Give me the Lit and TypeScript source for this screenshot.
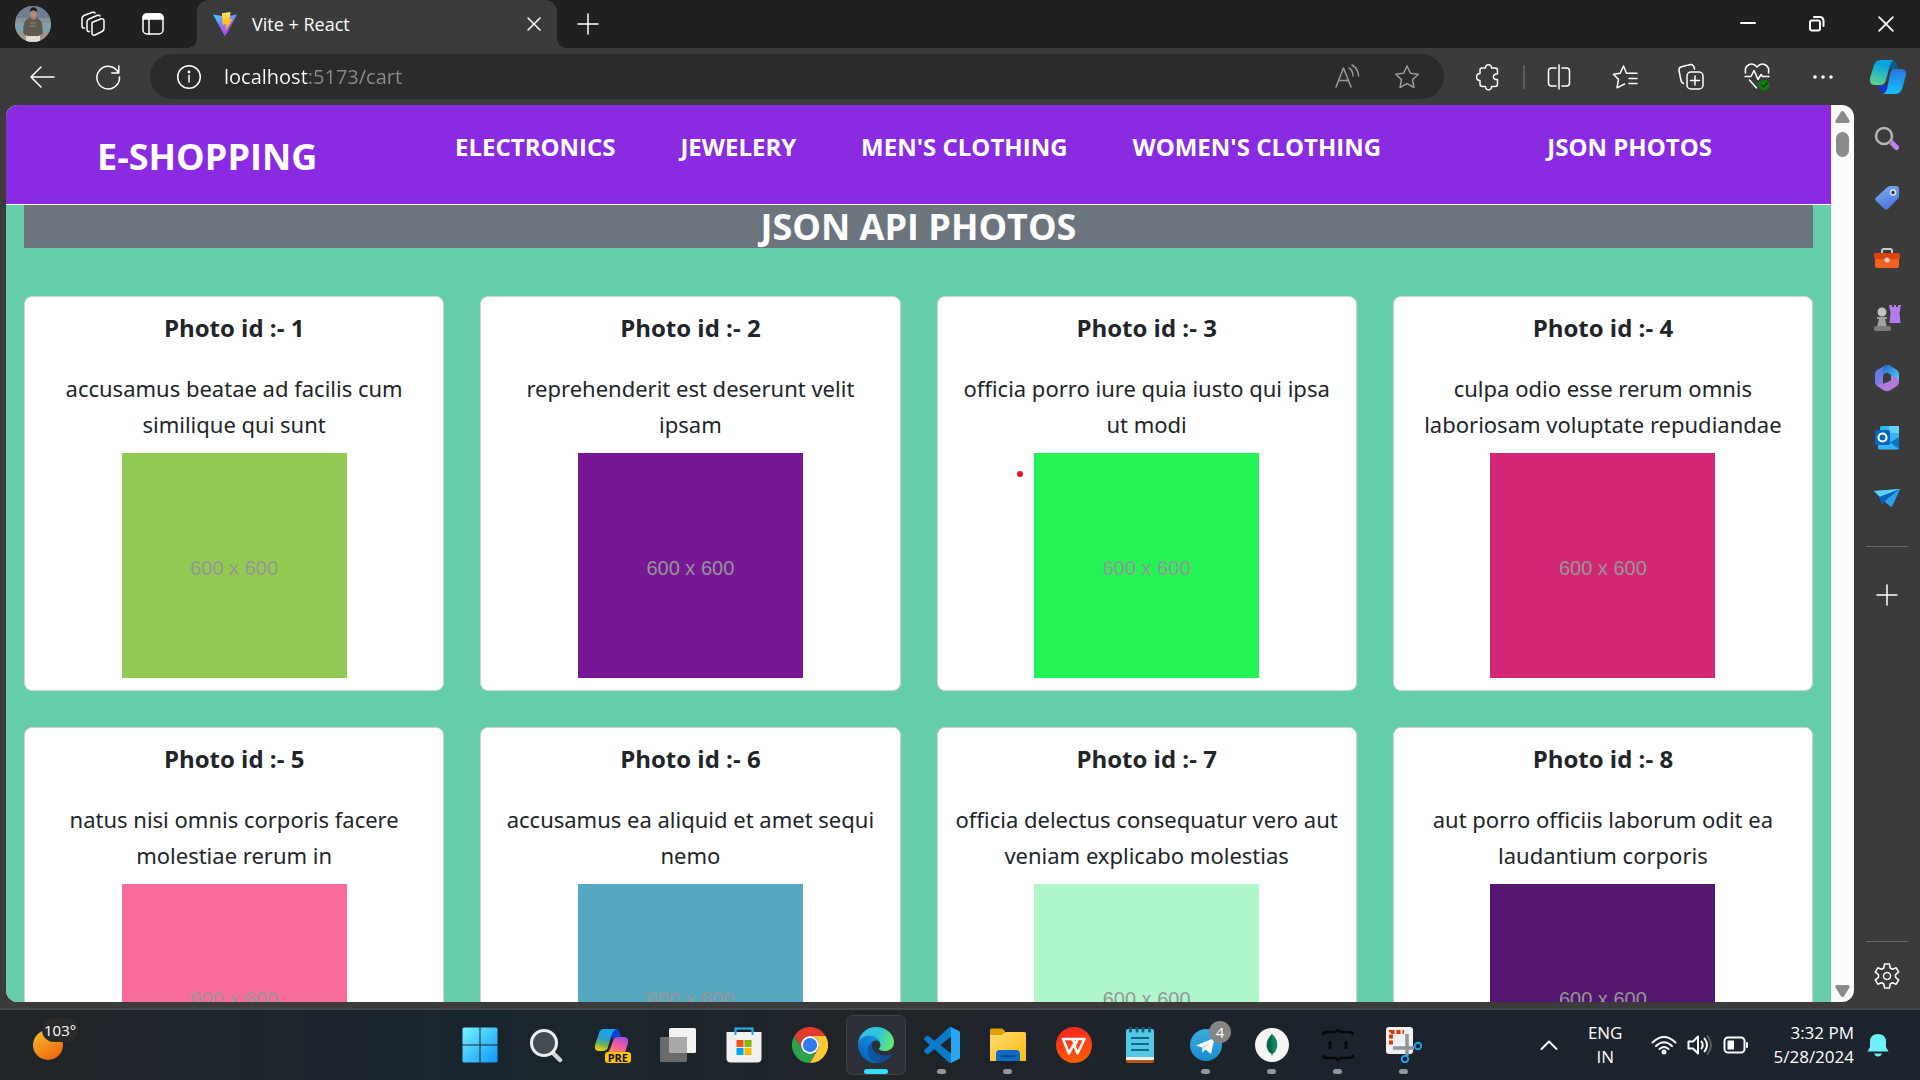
import { LitElement, html, css, nothing, TemplateResult } from "lit";
import { customElement, property } from "lit/decorators.js";
import { classMap } from "lit/directives/class-map.js";
import { styleMap } from "lit/directives/style-map.js";

interface Photo {
  id: number;
  title: string;
  color: string;
}

const PHOTOS: Photo[] = [
  { id: 1, title: "accusamus beatae ad facilis cum similique qui sunt", color: "#92c952" },
  { id: 2, title: "reprehenderit est deserunt velit ipsam", color: "#771796" },
  { id: 3, title: "officia porro iure quia iusto qui ipsa ut modi", color: "#24f355" },
  { id: 4, title: "culpa odio esse rerum omnis laboriosam voluptate repudiandae", color: "#d32776" },
  { id: 5, title: "natus nisi omnis corporis facere molestiae rerum in", color: "#f66b97" },
  { id: 6, title: "accusamus ea aliquid et amet sequi nemo", color: "#56a8c2" },
  { id: 7, title: "officia delectus consequatur vero aut veniam explicabo molestias", color: "#b0f7cc" },
  { id: 8, title: "aut porro officiis laborum odit ea laudantium corporis", color: "#54176f" },
];

const CATEGORIES = ["ELECTRONICS", "JEWELERY", "MEN'S CLOTHING", "WOMEN'S CLOTHING"];

/* ---------- browser chrome icons ---------- */

const avatar = html`<svg width="36" height="36" viewBox="0 0 36 36">
  <defs><clipPath id="av"><circle cx="18" cy="18" r="18" /></clipPath></defs>
  <g clip-path="url(#av)">
    <rect width="36" height="36" fill="#8a9299" />
    <rect y="0" width="36" height="12" fill="#6d7e90" />
    <rect y="17" width="36" height="9" fill="#7fa3ad" />
    <rect y="26" width="36" height="10" fill="#9d968b" />
    <path d="M11 29 11 36 25 36 25 29Z" fill="#e3dccf" />
    <path d="M8.500 28c-.5-8 0-14 5.500-16l4-1 4 1c5.500 2 6 8 5.500 16l-3 1v1H11.500v-1z" fill="#5f5a4e" />
    <path d="M15 17h6M15 20h6" stroke="#94806a" stroke-width="1" />
    <path d="M16 10h5v3l-2.500 1-2.500-1z" fill="#a87660" />
    <ellipse cx="18.500" cy="7.500" rx="3.300" ry="4.200" fill="#b58a72" />
    <path d="M14.800 6.500c-.5-7 8-7 7.400 0-1-2-6-3-7.400 0z" fill="#1c1a1b" />
  </g>
</svg>`;

const workspaces = html`<svg width="26" height="26" viewBox="0 0 26 26" class="line">
  <path d="M12 11.500 20.500 8q3.500-.8 3.500 2v7.500q0 2-2 3L15 24q-3 1-3-2z" />
  <path d="M9.500 20.500Q7 21 7 18.500V11q0-2 2-3l8.500-3.700q1.800-.5 2.500.700" />
  <path d="M4.500 17Q2 17.500 2 15V7.500q0-2 2-3l8.500-3.200q1.800-.5 2.500.700" />
</svg>`;

const tabActions = html`<svg width="24" height="24" viewBox="0 0 24 24" class="line">
  <rect x="2" y="2" width="20" height="20" rx="4" />
  <path d="M2 7V6q0-4 4-4h12q4 0 4 4v1z" fill="#fff" />
  <path d="M8 7v15" />
</svg>`;

const viteLogo = html`<svg width="24" height="24" viewBox="0 0 24 24">
  <defs>
    <linearGradient id="vt" x1="0" y1="0" x2=".6" y2="1"><stop offset="0" stop-color="#41d1ff" /><stop offset="1" stop-color="#bd34fe" /></linearGradient>
    <linearGradient id="vb" x1="0" y1="0" x2="0" y2="1"><stop offset="0" stop-color="#ffea83" /><stop offset=".3" stop-color="#ffcf30" /><stop offset="1" stop-color="#ffa800" /></linearGradient>
  </defs>
  <path d="M0 2.500 12 4.500 24 2.500 12.500 23.500q-.5.700-1 0z" fill="url(#vt)" />
  <path d="M9 1.300 17.500 0 16.500 7.500 19.500 7 12.500 19 13 12 9.500 13z" fill="url(#vb)" />
</svg>`;

const closeIcon = (size: number) => html`<svg width=${size} height=${size} viewBox="0 0 14 14" class="line"><path d="M1 1 13 13M13 1 1 13" /></svg>`;
const plusIcon = html`<svg width="22" height="22" viewBox="0 0 22 22" class="line"><path d="M11 1v20M1 11h20" /></svg>`;
const minimizeIcon = html`<svg width="16" height="16" viewBox="0 0 16 16" class="line strong"><path d="M1 7h14" /></svg>`;
const restoreIcon = html`<svg width="18" height="18" viewBox="0 0 18 18" class="line strong">
  <rect x="2" y="5.500" width="10" height="10" rx="2" /><path d="M6 2h5.500Q15.500 2 15.500 6v5" />
</svg>`;

const backIcon = html`<svg width="26" height="24" viewBox="0 0 26 24" class="line"><path d="M25 12H2M12 2 2 12 12 22" /></svg>`;
const refreshIcon = html`<svg width="26" height="26" viewBox="0 0 26 26" class="line">
  <path d="M23.500 9A11.300 11.300 0 1 0 24.500 13M23.800 2v7h-7" />
</svg>`;
const infoIcon = html`<svg width="26" height="26" viewBox="0 0 26 26" class="line">
  <circle cx="13" cy="13" r="11.300" /><path d="M13 11.500V18" /><circle cx="13" cy="8" r=".7" fill="#fff" />
</svg>`;
const readAloud = html`<svg width="26" height="26" viewBox="0 0 26 26" class="line dim">
  <path d="M2 23 9.500 4 17 23M5 16.500h9M15 4q4 2.500 4 8M18 1q6.500 4 6.500 11" />
</svg>`;
const STAR = "M13 2 16.400 9.200 24.300 10.200 18.500 15.600 20 23.500 13 19.600 6 23.500 7.500 15.600 1.700 10.200 9.600 9.200Z";
const starIcon = html`<svg width="26" height="26" viewBox="0 0 26 26" class="line dim"><path d=${STAR} /></svg>`;
const puzzleIcon = html`<svg width="26" height="28" viewBox="0 0 26 28" class="line">
  <path d="M4 7Q4 5 6 5H9.500C9 .5 16 .5 15.500 5H19q2.500 0 2.500 2.500V11c-5.500-1-5.500 6.500 0 5.500V21q0 2.500-2.500 2.500h-3.500c.5 4.500-6.500 4.500-6 0H6.500Q4 23.500 4 21v-3.500c-4.500 0-4.500-7 0-7z" />
</svg>`;
const splitIcon = html`<svg width="26" height="26" viewBox="0 0 26 26" class="line">
  <path d="M10 4H5.500Q2.500 4 2.500 7v12q0 3 3 3H10M16 4h4.500q3 0 3 3v12q0 3-3 3H16M13 1v24" />
</svg>`;
const favoritesIcon = html`<svg width="26" height="26" viewBox="0 0 26 26" class="line">
  <path d="M14.500 9.200 11.500 2 8.200 9.200 1.500 10.300 6.500 15.500 5 23.800 12.500 20M15 9.200h10M17 14.500h8M17 19.500h8" />
</svg>`;
const collectionsIcon = html`<svg width="26" height="28" viewBox="0 0 26 28" class="line">
  <rect x="9" y="9" width="16" height="17" rx="4" /><path d="M17 13v9M12.500 17.500h9" />
  <path d="M5.500 20.500Q3.500 20 3 17.500L1 7.500q-.3-3 2.500-3.700L12.500 1.500q2.500-.3 3.300 2l.7 2.500" />
</svg>`;
const heartIcon = html`<svg width="26" height="30" viewBox="0 0 26 30" class="line">
  <path d="M1.500 11C0 3 8-1 13 5c5-6 13-2 11.500 6M1 14.500h6l3-6 4 9 3-5 1.500 2H25M5.500 18l7 8" />
  <circle cx="20" cy="23" r="5.500" fill="#107c10" stroke="none" /><path d="M17.500 23l2 2 3.500-4" stroke="#0a3d0a" />
</svg>`;
const moreIcon = html`<svg width="22" height="6" viewBox="0 0 22 6"><g fill="#fff"><circle cx="3" cy="3" r="1.800" /><circle cx="11" cy="3" r="1.800" /><circle cx="19" cy="3" r="1.800" /></g></svg>`;

const copilotIcon = html`<svg width="36" height="34" viewBox="0 0 36 34">
  <defs>
    <linearGradient id="cp1" x1=".5" y1="0" x2=".3" y2="1"><stop offset=".2" stop-color="#0aa5e0" /><stop offset="1" stop-color="#5fd38a" /></linearGradient>
    <linearGradient id="cp2" x1=".5" y1="0" x2=".5" y2="1"><stop offset="0" stop-color="#2b74dc" /><stop offset="1" stop-color="#14c3fb" /></linearGradient>
  </defs>
  <path d="M17 1h5q4 0 5 4l1 4q-4-1-6 2z" fill="#0a5c94" />
  <path d="M8 25h10l-2 7q-4 2-6-2z" fill="#1136cf" />
  <path d="M11 0h13q-3 1-4 5l-4 15q-1 5-6 5H5q-6 0-5-7L4 5q1.500-5 7-5z" fill="url(#cp1)" />
  <path d="M25 9h5q7 0 6 6l-4 14q-2 5-7 5H13q3-1 4-5l3-15q1-5 5-5z" fill="url(#cp2)" />
</svg>`;

/* ---------- side bar icons ---------- */

const sideSearch = html`<svg width="26" height="28" viewBox="0 0 26 28">
  <path d="M18 19 22.500 23.500" stroke="#c084f5" stroke-width="5" stroke-linecap="round" />
  <circle cx="10" cy="12" r="8" fill="none" stroke="#b5b5b5" stroke-width="2.500" />
  <path d="M15.500 17.500 17.500 19.500" stroke="#8d8d8d" stroke-width="2.500" />
</svg>`;
const sideTag = html`<svg width="26" height="26" viewBox="0 0 26 26">
  <defs><linearGradient id="tg" x1="0" y1="0" x2=".4" y2="1"><stop offset="0" stop-color="#7bb0f5" /><stop offset="1" stop-color="#4f78dc" /></linearGradient></defs>
  <path d="M13 2.500Q14 1 16 1h6.500Q25 1 25 4v7q0 1.500-1 2.500L14 24q-2 1.500-3.500 0L2 16q-1.500-1.500-.3-3.300z" fill="url(#tg)" />
  <circle cx="19" cy="7.500" r="2.500" fill="#2d2d3d" stroke="#dfe8fa" stroke-width="1.500" />
</svg>`;
const sideTools = html`<svg width="28" height="24" viewBox="0 0 28 24">
  <path d="M9 8V5q0-2 2-2h6q2 0 2 2v3" fill="none" stroke="#c9c9c9" stroke-width="2" />
  <path d="M2 11h24v9q0 2-2 2H4q-2 0-2-2z" fill="#f0621d" />
  <rect x="1" y="7" width="26" height="6" rx="1.500" fill="#d9440b" />
  <circle cx="14" cy="14" r="2.600" fill="#cfcfcf" />
</svg>`;
const sideGames = html`<svg width="28" height="28" viewBox="0 0 28 28">
  <path d="M16 1h3v2h2V1h2v2h2V1h3l-1.500 8 1 10H16.500l1-10z" fill="#b67bea" />
  <circle cx="9" cy="8" r="4.500" fill="#c4c4c4" />
  <path d="M4 13h10v2h-2l2 8H4l2-8H4z" fill="#a3a3a3" /><rect x="1" y="22" width="17" height="5" rx="2" fill="#7a7a7a" />
</svg>`;
const sideOffice = html`<svg width="26" height="28" viewBox="0 0 26 28">
  <defs>
    <linearGradient id="o1" x1="0" y1="0" x2="0" y2="1"><stop offset="0" stop-color="#4f7be8" /><stop offset="1" stop-color="#8b7be6" /></linearGradient>
    <linearGradient id="o2" x1="0" y1="0" x2="1" y2="1"><stop offset="0" stop-color="#2464c8" /><stop offset="1" stop-color="#4dd2f8" /></linearGradient>
  </defs>
  <path d="M12 1 3 6Q1 7.500 1 10v8q0 2.500 2 4l4 1q3-2 2-5V9q0-5 3-8z" fill="url(#o1)" />
  <path d="M10 2q3-2 6-.5L23 6q2 1.500 2 4v6l-8-5-4-2q-3 1-4 3V7z" fill="url(#o2)" />
  <path d="M3 22l8-3 6-3V11l8 4v3q0 2.500-2 4l-7 4.500q-3 1.500-6 0z" fill="#b07bd8" />
  <path d="M9 11 13 8.500 17 11v5l-4 2.500L9 16z" fill="#3b3b3b" />
</svg>`;
const sideOutlook = html`<svg width="28" height="28" viewBox="0 0 28 28">
  <rect x="7" y="2" width="19" height="14" rx="1.500" fill="#33b6f2" /><rect x="16" y="2" width="10" height="7" fill="#5fd5fb" />
  <path d="M5 14h21v10q0 1.500-1.500 1.500h-18Q5 25.500 5 24z" fill="#35b4f4" /><path d="M26 13 17 18.500 26 25z" fill="#0f74c4" />
  <rect x="2" y="6" width="15" height="15" rx="1.500" fill="#0a66c2" />
  <circle cx="9.500" cy="13.500" r="4" fill="none" stroke="#fff" stroke-width="2.200" />
</svg>`;
const sideSend = html`<svg width="28" height="22" viewBox="0 0 28 22">
  <path d="M1 4 27 2 18 20 11 14z" fill="#2fa8ec" /><path d="M1 4 27 2 9 12z" fill="#5bd0fb" />
  <path d="M6 10 27 2 12 14 9 18z" fill="#0b62bd" /><path d="M12 14 27 2 19 20z" fill="#2c9fe8" />
</svg>`;
const gearIcon = html`<svg width="26" height="28" viewBox="0 0 26 28" class="line">
  <path d="M10.500 2h5l.7 4 2.200 1.300 3.800-1.500 2.500 4.300-3.200 2.600v2.600l3.200 2.600-2.500 4.300-3.800-1.500L16.200 22l-.7 4h-5l-.7-4-2.200-1.300-3.800 1.500-2.500-4.300 3.200-2.600v-2.600L1.300 10.100l2.500-4.300 3.800 1.500L9.800 6z" />
  <circle cx="13" cy="14" r="3.500" />
</svg>`;

/* ---------- task bar icons ---------- */

const startIcon = html`<svg width="36" height="36" viewBox="0 0 36 36">
  <defs><linearGradient id="st" gradientUnits="userSpaceOnUse" x1="0" y1="0" x2="36" y2="36"><stop offset="0" stop-color="#7af3ff" /><stop offset="1" stop-color="#0a98fb" /></linearGradient></defs>
  <path d="M2 .5h15.500v17H.5V2Q.5.500 2 .5zM18.500.5H34q1.500 0 1.500 1.500v15.500h-17zM.5 18.500h17v17H2q-1.500 0-1.500-1.500zM18.500 18.500h17V34q0 1.500-1.500 1.500H18.500z" fill="url(#st)" />
</svg>`;
const taskSearch = html`<svg width="34" height="36" viewBox="0 0 34 36">
  <path d="M23 25 31 33" stroke="#d4d4d6" stroke-width="4.500" stroke-linecap="round" />
  <circle cx="15" cy="16" r="12.500" fill="#454b52" stroke="#efefef" stroke-width="3" />
</svg>`;
const taskCopilot = html`<svg width="36" height="36" viewBox="0 0 36 36">
  <defs>
    <linearGradient id="tc1" x1=".5" y1="0" x2=".3" y2="1"><stop offset=".1" stop-color="#18a5ec" /><stop offset=".45" stop-color="#2f9bc7" /><stop offset=".7" stop-color="#6ab85a" /><stop offset="1" stop-color="#f0cf10" /></linearGradient>
    <linearGradient id="tc2" x1=".8" y1="0" x2=".2" y2="1"><stop offset="0" stop-color="#a24be8" /><stop offset=".5" stop-color="#ef5d9b" /><stop offset="1" stop-color="#fb8d5c" /></linearGradient>
  </defs>
  <path d="M15 2h6q4 0 5 4l1 4q-5-1-8 3z" fill="#1240d0" />
  <path d="M10 2h13q-4 1-5 5l-4 13q-1 4-5 4H5q-5 0-4-6L5 6q1-4 5-4z" fill="url(#tc1)" />
  <path d="M25 10h5q5 0 4 6l-3 10H12q3-1 4-4l3-8q1-4 6-4z" fill="url(#tc2)" />
</svg>`;
const taskView = html`<svg width="36" height="36" viewBox="0 0 36 36">
  <rect x="9" y="1" width="27" height="25" rx="1.500" fill="#f3f3f3" /><rect x="0" y="10" width="27" height="25" rx="1.500" fill="#6b6b6b" />
  <path d="M9 10h18v16H10.500Q9 26 9 24.500z" fill="#a9a9a9" />
</svg>`;
const storeIcon = html`<svg width="36" height="36" viewBox="0 0 36 36">
  <path d="M9.500 7V1.500h17V7" fill="none" stroke="#29b6f0" stroke-width="2" />
  <path d="M.5 5h35v26q0 4.500-4.500 4.500H5Q.5 35.500.5 31z" fill="#f0f0f0" /><path d="M9.500 8V2M26.500 2v6" stroke="#1ba3e4" stroke-width="2" />
  <path d="M10.500 13h7v7h-7z" fill="#f25022" /><path d="M18.500 13h7v7h-7z" fill="#7fba00" />
  <path d="M10.500 21h7v7h-7z" fill="#00a4ef" /><path d="M18.500 21h7v7h-7z" fill="#ffb900" />
</svg>`;
const chromeIcon = html`<svg width="36" height="36" viewBox="0 0 48 48">
  <path d="M24 12H44.800A24 24 0 0 0 3.200 12L13.600 30A12 12 0 0 1 24 12z" fill="#e33b2e" />
  <path d="M3.200 12A24 24 0 0 0 24 48L34.400 30A12 12 0 0 1 13.600 30z" fill="#2ba24c" />
  <path d="M44.800 12A24 24 0 0 1 24 48L34.400 30A12 12 0 0 0 24 12z" fill="#fcc934" />
  <circle cx="24" cy="24" r="12" fill="#fff" /><circle cx="24" cy="24" r="9.500" fill="#2f7bef" />
</svg>`;
const edgeIcon = html`<svg width="36" height="36" viewBox="0 0 256 256">
  <defs>
    <linearGradient id="e1" x1="0" y1=".5" x2="1" y2=".5"><stop offset="0" stop-color="#0c59a4" /><stop offset="1" stop-color="#114a8b" /></linearGradient>
    <linearGradient id="e2" x1="1" y1="0" x2=".3" y2="1"><stop offset="0" stop-color="#1b9de2" /><stop offset=".6" stop-color="#0f78d0" /><stop offset="1" stop-color="#0067b8" /></linearGradient>
    <linearGradient id="e3" x1="0" y1=".3" x2="1" y2=".6"><stop offset="0" stop-color="#35c1f1" /><stop offset=".5" stop-color="#2fc3d9" /><stop offset="1" stop-color="#66eb6e" /></linearGradient>
  </defs>
  <path fill="url(#e1)" d="M235.680 190.890a93 93 0 0 1-10.670 4.820 103.600 103.600 0 0 1-36.560 6.530c-48.170 0-90.130-33.130-90.130-75.670a32.100 32.100 0 0 1 16.740-27.920c-43.570 1.830-54.770 47.250-54.770 73.840 0 75.240 69.310 82.840 84.240 82.840 8.050 0 20.190-2.340 27.500-4.650l1.340-.45a128.340 128.340 0 0 0 66.600-52.800 4 4 0 0 0-4.290-6.540z" />
  <path fill="url(#e2)" d="M105.730 241.420a79.200 79.200 0 0 1-22.740-21.340 80.720 80.720 0 0 1 29.500-120.800c3.120-1.470 8.450-4.050 15.540-3.950a32.350 32.350 0 0 1 25.690 13 31.880 31.880 0 0 1 6.360 18.670c0-.21 24.460-79.600-80-79.600-43.900 0-80 41.660-80 78.210a130.150 130.150 0 0 0 12.110 56 128 128 0 0 0 156.380 67.110 75.550 75.550 0 0 1-62.780-7.300z" />
  <path fill="url(#e3)" d="M152.330 148.860c-.81 1.050-3.300 2.500-3.300 5.660 0 2.610 1.700 5.120 4.720 7.230 14.380 10 41.490 8.680 41.560 8.680a59.560 59.560 0 0 0 30.270-8.350 61.380 61.380 0 0 0 30.430-52.880c.26-22.410-8-37.310-11.340-43.910C223.440 23.870 177.710 0 128 0A128 128 0 0 0 0 126.200c.48-36.540 36.800-66.050 80-66.050 3.500 0 23.460.34 42 10.070 16.340 8.580 24.900 18.940 30.850 29.210 6.180 10.670 7.280 24.150 7.280 29.520s-2.740 13.330-7.800 19.910z" />
</svg>`;
const codeIcon = html`<svg width="36" height="36" viewBox="0 0 24 24">
  <path fill="#0a7bc9" d="M23.150 2.587L18.210.21a1.494 1.494 0 0 0-1.705.29l-9.460 8.630-4.120-3.128a.999.999 0 0 0-1.276.057L.327 7.261A1 1 0 0 0 .326 8.740L3.899 12 .326 15.260a1 1 0 0 0 .001 1.479L1.650 17.940a.999.999 0 0 0 1.276.057l4.120-3.128 9.460 8.630a1.492 1.492 0 0 0 1.704.29l4.942-2.377A1.500 1.500 0 0 0 24 20.060V3.939a1.500 1.500 0 0 0-.85-1.352zm-5.146 14.861L10.826 12l7.178-5.448v10.896z" />
  <path fill="#2ba6f5" d="M18 .2 23.150 2.587A1.500 1.500 0 0 1 24 3.939V20.060a1.500 1.500 0 0 1-.85 1.350L18 23.800z" />
</svg>`;
const folderIcon = html`<svg width="36" height="34" viewBox="0 0 36 34">
  <defs><linearGradient id="fd" x1="0" y1="0" x2="1" y2="1"><stop offset="0" stop-color="#ffdc70" /><stop offset="1" stop-color="#fbbc12" /></linearGradient></defs>
  <path d="M0 2Q0 .5 1.500.5h10q1.500 0 2.500 1.500l2 3-4 4H0z" fill="#dfa000" />
  <path d="M0 7h10q2 0 3.500-1.500T17 4h17.500Q36 4 36 5.500V33H0z" fill="url(#fd)" />
  <path d="M6 33v-7q0-4 4-4h16q4 0 4 4v7z" fill="#0f6cc4" /><path d="M11 28h14" stroke="#0a4a90" stroke-width="2" />
</svg>`;
const officeIcon = html`<svg width="36" height="36" viewBox="0 0 36 36">
  <defs><linearGradient id="wp" x1=".3" y1="0" x2=".6" y2="1"><stop offset="0" stop-color="#fb2323" /><stop offset="1" stop-color="#fe5f06" /></linearGradient></defs>
  <circle cx="18" cy="18" r="18" fill="url(#wp)" />
  <path d="M7 12H16L18.500 15.500 13 26.500zM16.500 12H22L18.500 19 21.500 26.500 28.500 12H23" fill="none" stroke="#fff" stroke-width="2.500" stroke-linejoin="round" />
</svg>`;
const notepadIcon = html`<svg width="28" height="36" viewBox="0 0 28 36">
  <path d="M0 30h28v4q0 2-2 2H2q-2 0-2-2z" fill="#b8560f" /><path d="M0 29h28v4H0z" fill="#f2f2f2" />
  <path d="M0 4q0-2 2-2h24q2 0 2 2v26H0z" fill="#56c7e2" />
  <path d="M5 11h18M5 17h18M5 23h18" stroke="#0e6688" stroke-width="1.800" />
  <path d="M4.500 1v3M11 1v3M17 1v3M23.500 1v3" stroke="#0f5f80" stroke-width="3" stroke-linecap="round" />
</svg>`;
const telegramIcon = html`<svg width="32" height="32" viewBox="0 0 32 32">
  <defs><linearGradient id="tl" x1="0" y1="0" x2="0" y2="1"><stop offset="0" stop-color="#37aee2" /><stop offset="1" stop-color="#1b8ccb" /></linearGradient></defs>
  <circle cx="16" cy="16" r="16" fill="url(#tl)" /><path d="M6 16.500 24.500 9 21 25 15.500 20.500 12.500 23.500 12 18.500z" fill="#fff" /><path d="M12 18.500 21 12 14 19.500 12.500 23.500z" fill="#c3dcec" />
</svg>`;
const leafIcon = html`<svg width="34" height="34" viewBox="0 0 34 34">
  <circle cx="17" cy="17" r="17" fill="#f5f5f5" /><path d="M17 6q6 6 5 12-.5 5-4.500 8l-.5 3-.5-3Q12 23 11.500 18 11 12 17 6z" fill="#06684d" /><path d="M17 6q6 6 5 12-.5 5-4.500 8z" fill="#0f8a62" />
</svg>`;
const bracesIcon = html`<svg width="32" height="34" viewBox="0 0 32 34">
  <path d="M1 7q0-3 4-3h8l3-2 3 2h8q4 0 4 3M1 27q0 3 4 3h8l3 2 3-2h8q4 0 4-3M8 13v8M24 13v8" fill="none" stroke="#07090b" stroke-width="2.600" />
</svg>`;
const snipIcon = html`<svg width="36" height="36" viewBox="0 0 36 36">
  <rect width="27" height="27" rx="3" fill="#f1f1f3" />
  <path d="M5 17.500V5H18" fill="none" stroke="#d83b01" stroke-width="4" stroke-dasharray="4 2" />
  <path d="M21 7v22M7 21h21" stroke="#8e959c" stroke-width="3.500" />
  <circle cx="19" cy="32" r="3.200" fill="none" stroke="#1b9de8" stroke-width="2" /><circle cx="32" cy="19" r="3.200" fill="none" stroke="#1b9de8" stroke-width="2" />
</svg>`;

const chevronUp = html`<svg width="18" height="12" viewBox="0 0 18 12" class="line strong"><path d="M1.500 10 9 2.500 16.500 10" /></svg>`;
const wifiIcon = html`<svg width="26" height="20" viewBox="0 0 26 20" class="line strong">
  <path d="M1.500 7.500q11.500-11 23 0M5 11q8-7.500 16 0M8.500 14q4.500-4 9 0" /><circle cx="13" cy="17" r="1.500" fill="#fff" />
</svg>`;
const volumeIcon = html`<svg width="26" height="22" viewBox="0 0 26 22" class="line strong">
  <path d="M1.500 7.500v7H6l5 5V2.500l-5 5zM14.500 7.500q2.500 3.500 0 7M17.500 4.500q5 6.500 0 13" /><path d="M20.500 2q7 9 0 18" stroke="#5c6166" />
</svg>`;
const batteryIcon = html`<svg width="26" height="18" viewBox="0 0 26 18" class="line strong">
  <rect x="1.500" y="1.500" width="20" height="15" rx="3.500" /><rect x="4.500" y="4.500" width="6.500" height="9" fill="#fff" stroke="none" /><path d="M24 7v4" />
</svg>`;
const bellIcon = html`<svg width="22" height="24" viewBox="0 0 22 24">
  <path d="M11 1q8 0 8 8v5l2.500 4.500H.5L3 14V9q0-8 8-8zM7 20.500h8q-1 3-4 3t-4-3z" fill="#6ff0fb" />
</svg>`;
const sunIcon = html`<svg width="32" height="32" viewBox="0 0 32 32">
  <defs><linearGradient id="sn" x1="0" y1="0" x2=".6" y2="1"><stop offset="0" stop-color="#f5c12e" /><stop offset="1" stop-color="#f06a10" /></linearGradient></defs>
  <circle cx="16" cy="16" r="15" fill="url(#sn)" />
</svg>`;

const iconStyles = css`
  svg { display: block; flex: none; }
  .line { fill: none; stroke: #fff; stroke-width: 1.5; stroke-linecap: round; stroke-linejoin: round; overflow: visible; }
  .strong { stroke-width: 2; }
  .dim { stroke: #9a9a9a; }
  button {
    display: flex;
    align-items: center;
    justify-content: center;
    padding: 0;
    border: 0;
    background: none;
    color: inherit;
    font: inherit;
  }
`;

@customElement("browser-bar")
class BrowserBar extends LitElement {
  static styles = [
    iconStyles,
    css`
      :host { display: block; }
      .strip { display: flex; height: 48px; padding-left: 3px; background: #202020; }
      .tools { display: flex; margin-right: 14px; }
      .tool { width: 60px; }
      .tab {
        position: relative;
        display: flex;
        align-items: center;
        width: 360px;
        box-sizing: border-box;
        padding: 0 16px;
        border-radius: 12px 12px 0 0;
        background: #3b3b3b;
        gap: 15px;
      }
      .tab::before, .tab::after {
        content: "";
        position: absolute;
        bottom: 0;
        width: 10px;
        height: 10px;
      }
      .tab::before { right: 100%; background: radial-gradient(circle at 0 0, transparent 10px, #3b3b3b 10px); }
      .tab::after { left: 100%; background: radial-gradient(circle at 100% 0, transparent 10px, #3b3b3b 10px); }
      .title { flex: 1; font-size: 18px; line-height: 24px; }
      .new { width: 62px; }
      .window { display: flex; margin-left: auto; }
      .window button { width: 69px; }
      .bar { display: flex; align-items: center; height: 57px; padding-left: 9px; background: #3b3b3b; }
      .cell { flex: none; width: 66px; height: 45px; }
      .last { width: 64px; }
      .address {
        display: flex;
        align-items: center;
        flex: 1;
        height: 45px;
        margin: 0 12px 0 9px;
        padding: 0 7px 0 26px;
        box-sizing: border-box;
        border-radius: 23px;
        background: #2b2b2b;
      }
      .url {
        flex: 1;
        min-width: 0;
        margin-left: 22px;
        padding: 0;
        border: 0;
        outline: 0;
        font: inherit;
        font-size: 20px;
        background: linear-gradient(90deg, #fff 84px, #8c8c8c 84px);
        -webkit-background-clip: text;
        background-clip: text;
        -webkit-text-fill-color: transparent;
      }
      .small { width: 60px; height: 45px; }
      .rule { width: 2px; height: 24px; margin: 0 1px; background: #5c5c5c; }
    `,
  ];

  render() {
    return html`
      <div class="strip">
        <div class="tools">
          <button class="tool" aria-label="Profile">${avatar}</button>
          <button class="tool" aria-label="Workspaces">${workspaces}</button>
          <button class="tool" aria-label="Tab actions">${tabActions}</button>
        </div>
        <div class="tab">
          ${viteLogo}
          <span class="title">Vite + React</span>
          <button aria-label="Close tab">${closeIcon(14)}</button>
        </div>
        <button class="new" aria-label="New tab">${plusIcon}</button>
        <div class="window">
          <button aria-label="Minimize">${minimizeIcon}</button>
          <button aria-label="Restore">${restoreIcon}</button>
          <button aria-label="Close">${closeIcon(16)}</button>
        </div>
      </div>
      <div class="bar">
        <button class="cell" aria-label="Back">${backIcon}</button>
        <button class="cell" aria-label="Refresh">${refreshIcon}</button>
        <div class="address">
          <button aria-label="Site information">${infoIcon}</button>
          <input class="url" type="text" aria-label="Address" .value=${"localhost:5173/cart"} />
          <button class="small" aria-label="Read aloud">${readAloud}</button>
          <button class="small" aria-label="Add to favorites">${starIcon}</button>
        </div>
        <button class="cell" aria-label="Extensions">${puzzleIcon}</button>
        <span class="rule"></span>
        <button class="cell" aria-label="Split screen">${splitIcon}</button>
        <button class="cell" aria-label="Favorites">${favoritesIcon}</button>
        <button class="cell" aria-label="Collections">${collectionsIcon}</button>
        <button class="cell" aria-label="Browser essentials">${heartIcon}</button>
        <button class="cell" aria-label="More">${moreIcon}</button>
        <button class="cell last" aria-label="Copilot">${copilotIcon}</button>
      </div>
    `;
  }
}

@customElement("photo-card")
class PhotoCard extends LitElement {
  @property({ attribute: false }) photo!: Photo;

  static styles = css`
    :host { display: block; }
    .card {
      display: flex;
      flex-direction: column;
      align-items: center;
      padding: 13px 16px 12px;
      border: 1px solid #cfd3d6;
      border-radius: 8px;
      background: #fff;
      color: #212529;
      text-align: center;
      line-height: 36px;
    }
    .name { margin: 0 0 24px; font-size: 24px; line-height: 36px; }
    .text { margin: 0 0 11px; font-size: 22px; font-family: "Segoe UI", "Noto Sans", sans-serif; }
    .thumb {
      display: flex;
      align-items: center;
      justify-content: center;
      width: 225px;
      height: 225px;
      padding-top: 6px;
      box-sizing: border-box;
      color: #969696;
      font: 20px "Liberation Sans", Arial, sans-serif;
    }
  `;

  render() {
    const { id, title, color } = this.photo;
    return html`<article class="card">
      <h5 class="name">Photo id :- ${id}</h5>
      <p class="text">${title}</p>
      <div class="thumb" style=${styleMap({ backgroundColor: color })}>600 x 600</div>
    </article>`;
  }
}

@customElement("shop-page")
class ShopPage extends LitElement {
  static styles = css`
    :host { display: block; position: relative; overflow: hidden; background: #66cdaa; }
    .head {
      display: flex;
      align-items: flex-start;
      height: 99px;
      padding: 0 119px 0 91px;
      border-bottom: 1px solid #fff;
      background: #8a2be2;
      color: #fff;
      font-weight: 700;
    }
    a { color: inherit; text-decoration: none; }
    .brand { flex: 0 0 358px; padding-top: 28px; font-size: 36px; line-height: 48px; }
    .nav {
      display: flex;
      flex: 1;
      justify-content: space-between;
      margin-right: 166px;
      padding-top: 24px;
      font-size: 24px;
      line-height: 36px;
      white-space: nowrap;
    }
    .json { padding-top: 24px; font-size: 24px; line-height: 36px; white-space: nowrap; }
    .heading {
      margin: 0 18px 48px;
      padding-top: 1px;
      background: #6c757d;
      color: #fff;
      font-size: 36px;
      font-weight: 700;
      line-height: 42px;
      text-align: center;
    }
    .grid { display: grid; grid-template-columns: repeat(4, minmax(0, 1fr)); gap: 36px; margin: 0 18px; }
    .dot { position: absolute; left: 1011px; top: 366px; width: 6px; height: 6px; border-radius: 50%; background: #e81123; }
  `;

  render() {
    return html`
      <header class="head">
        <a class="brand" href="#">E-SHOPPING</a>
        <nav class="nav">${CATEGORIES.map((c) => html`<a href="#">${c}</a>`)}</nav>
        <a class="json" href="#">JSON PHOTOS</a>
      </header>
      <h2 class="heading">JSON API PHOTOS</h2>
      <div class="grid">${PHOTOS.map((p) => html`<photo-card .photo=${p}></photo-card>`)}</div>
      <span class="dot"></span>
    `;
  }
}

@customElement("side-bar")
class SideBar extends LitElement {
  static styles = [
    iconStyles,
    css`
      :host { display: flex; flex-direction: column; align-items: center; width: 66px; padding-top: 3px; box-sizing: border-box; }
      .item { width: 60px; height: 60px; }
      .rule { width: 42px; height: 1px; margin: 18px 0; background: #666; }
      .rest { flex: 1; }
      .foot { margin: 0; }
      .low { padding-top: 8px; }
    `,
  ];

  render() {
    const items: [string, TemplateResult][] = [
      ["Search", sideSearch],
      ["Shopping", sideTag],
      ["Tools", sideTools],
      ["Games", sideGames],
      ["Microsoft 365", sideOffice],
      ["Outlook", sideOutlook],
      ["Drop", sideSend],
    ];
    return html`
      ${items.map(([label, icon]) => html`<button class="item" aria-label=${label}>${icon}</button>`)}
      <span class="rule"></span>
      <button class="item" aria-label="Customize">${plusIcon}</button>
      <span class="rest"></span>
      <span class="rule foot"></span>
      <button class="item low" aria-label="Settings">${gearIcon}</button>
    `;
  }
}

interface App {
  name: string;
  icon: TemplateResult;
  open?: boolean;
  active?: boolean;
  badge?: string;
  tag?: string;
}

const APPS: App[] = [
  { name: "Start", icon: startIcon },
  { name: "Search", icon: taskSearch },
  { name: "Copilot", icon: taskCopilot, tag: "PRE" },
  { name: "Task view", icon: taskView },
  { name: "Store", icon: storeIcon },
  { name: "Chrome", icon: chromeIcon },
  { name: "Edge", icon: edgeIcon, open: true, active: true },
  { name: "Visual Studio Code", icon: codeIcon, open: true },
  { name: "File Explorer", icon: folderIcon, open: true },
  { name: "WPS Office", icon: officeIcon },
  { name: "Notepad", icon: notepadIcon },
  { name: "Telegram", icon: telegramIcon, open: true, badge: "4" },
  { name: "MongoDB Compass", icon: leafIcon, open: true },
  { name: "Braces", icon: bracesIcon, open: true },
  { name: "Snipping Tool", icon: snipIcon, open: true },
];

@customElement("task-bar")
class TaskBar extends LitElement {
  static styles = [
    iconStyles,
    css`
      :host {
        display: grid;
        grid-template-columns: 1fr auto 1fr;
        height: 70px;
        border-top: 2px solid #44494d;
        background: linear-gradient(90deg, #202427, #1b242d 18%, #19252d 25%, #1f2428 45%, #1c232c 70%, #1b232c);
        color: #fff;
        font-size: 17px;
        line-height: 24px;
      }
      .weather { position: relative; justify-self: start; width: 64px; margin-left: 32px; justify-content: flex-start; }
      .temp {
        position: absolute;
        left: 10px;
        top: 8px;
        padding: 0 2px;
        border-radius: 12px;
        background: #2a2a2a;
        font-size: 15px;
      }
      .apps { display: flex; align-items: center; gap: 6px; padding-right: 36px; }
      .app {
        position: relative;
        width: 60px;
        height: 60px;
        box-sizing: border-box;
        border: 1px solid transparent;
        border-radius: 6px;
      }
      .active { border-color: #3b3f44; background: #2d3036; }
      .mark { position: absolute; left: 24px; bottom: 0; width: 9px; height: 5px; border-radius: 3px; background: #94979a; }
      .active .mark { left: 17px; width: 24px; background: #32e0fb; }
      .badge {
        position: absolute;
        right: 4px;
        top: 5px;
        width: 22px;
        height: 22px;
        border-radius: 50%;
        background: #858585;
        font-size: 15px;
        line-height: 22px;
      }
      .tag {
        position: absolute;
        right: 10px;
        bottom: 11px;
        padding: 0 3px;
        border-radius: 3px;
        background: #ffc50a;
        color: #111;
        font-size: 11px;
        font-weight: 700;
        line-height: 11px;
      }
      .tray { display: flex; align-items: center; justify-content: flex-end; padding-right: 31px; }
      .lang { margin: 0 29px 0 30px; }
      .status { gap: 10px; margin-right: 24px; }
      .clock { text-align: right; margin-right: 13px; }
    `,
  ];

  render() {
    return html`
      <button class="weather" aria-label="Weather">${sunIcon}<span class="temp">103°</span></button>
      <div class="apps">
        ${APPS.map(
          (a) => html`<button class=${classMap({ app: true, active: !!a.active })} aria-label=${a.name}>
            ${a.icon}
            ${a.tag ? html`<span class="tag">${a.tag}</span>` : nothing}
            ${a.badge ? html`<span class="badge">${a.badge}</span>` : nothing}
            ${a.open ? html`<span class="mark"></span>` : nothing}
          </button>`,
        )}
      </div>
      <div class="tray">
        <button aria-label="Hidden icons">${chevronUp}</button>
        <button class="lang"><span>ENG<br />IN</span></button>
        <button class="status" aria-label="Network, volume, battery">${wifiIcon}${volumeIcon}${batteryIcon}</button>
        <button class="clock"><span>3:32 PM<br />5/28/2024</span></button>
        <button aria-label="Notifications">${bellIcon}</button>
      </div>
    `;
  }
}

@customElement("app-root")
class AppRoot extends LitElement {
  static styles = css`
    :host {
      display: flex;
      flex-direction: column;
      height: 100vh;
      overflow: hidden;
      background: #3b3b3b;
      color: #fff;
      font-family: "Segoe UI", "Open Sans", "Noto Sans", sans-serif;
    }
    .main { display: flex; flex: 1; min-height: 0; margin-bottom: 6px; padding-left: 6px; }
    .view { display: flex; flex: 1; min-width: 0; overflow: hidden; border-radius: 12px; background: #fcfcfc; }
    .page { flex: 1; min-width: 0; }
    .scroll { display: flex; flex-direction: column; align-items: center; width: 23px; padding: 6px 0 5px; box-sizing: border-box; }
    .thumb { width: 13px; height: 25px; margin: 9px 0 auto; border-radius: 7px; background: #8b8b8b; }
    .arrow { display: block; fill: #8b8b8b; }
  `;

  render() {
    return html`
      <browser-bar></browser-bar>
      <div class="main">
        <div class="view">
          <shop-page class="page"></shop-page>
          <div class="scroll">
            <svg class="arrow" width="15" height="12" viewBox="0 0 15 12"><path d="M7.500 0q1 0 1.700 1L14.500 9.500Q15 12 13 12H2Q0 12 .5 9.500L5.800 1q.7-1 1.700-1z" /></svg>
            <span class="thumb"></span>
            <svg class="arrow" width="15" height="12" viewBox="0 0 15 12"><path d="M7.500 12q1 0 1.700-1L14.500 2.500Q15 0 13 0H2Q0 0 .5 2.500L5.800 11q.7 1 1.700 1z" /></svg>
          </div>
        </div>
        <side-bar></side-bar>
      </div>
      <task-bar></task-bar>
    `;
  }
}
